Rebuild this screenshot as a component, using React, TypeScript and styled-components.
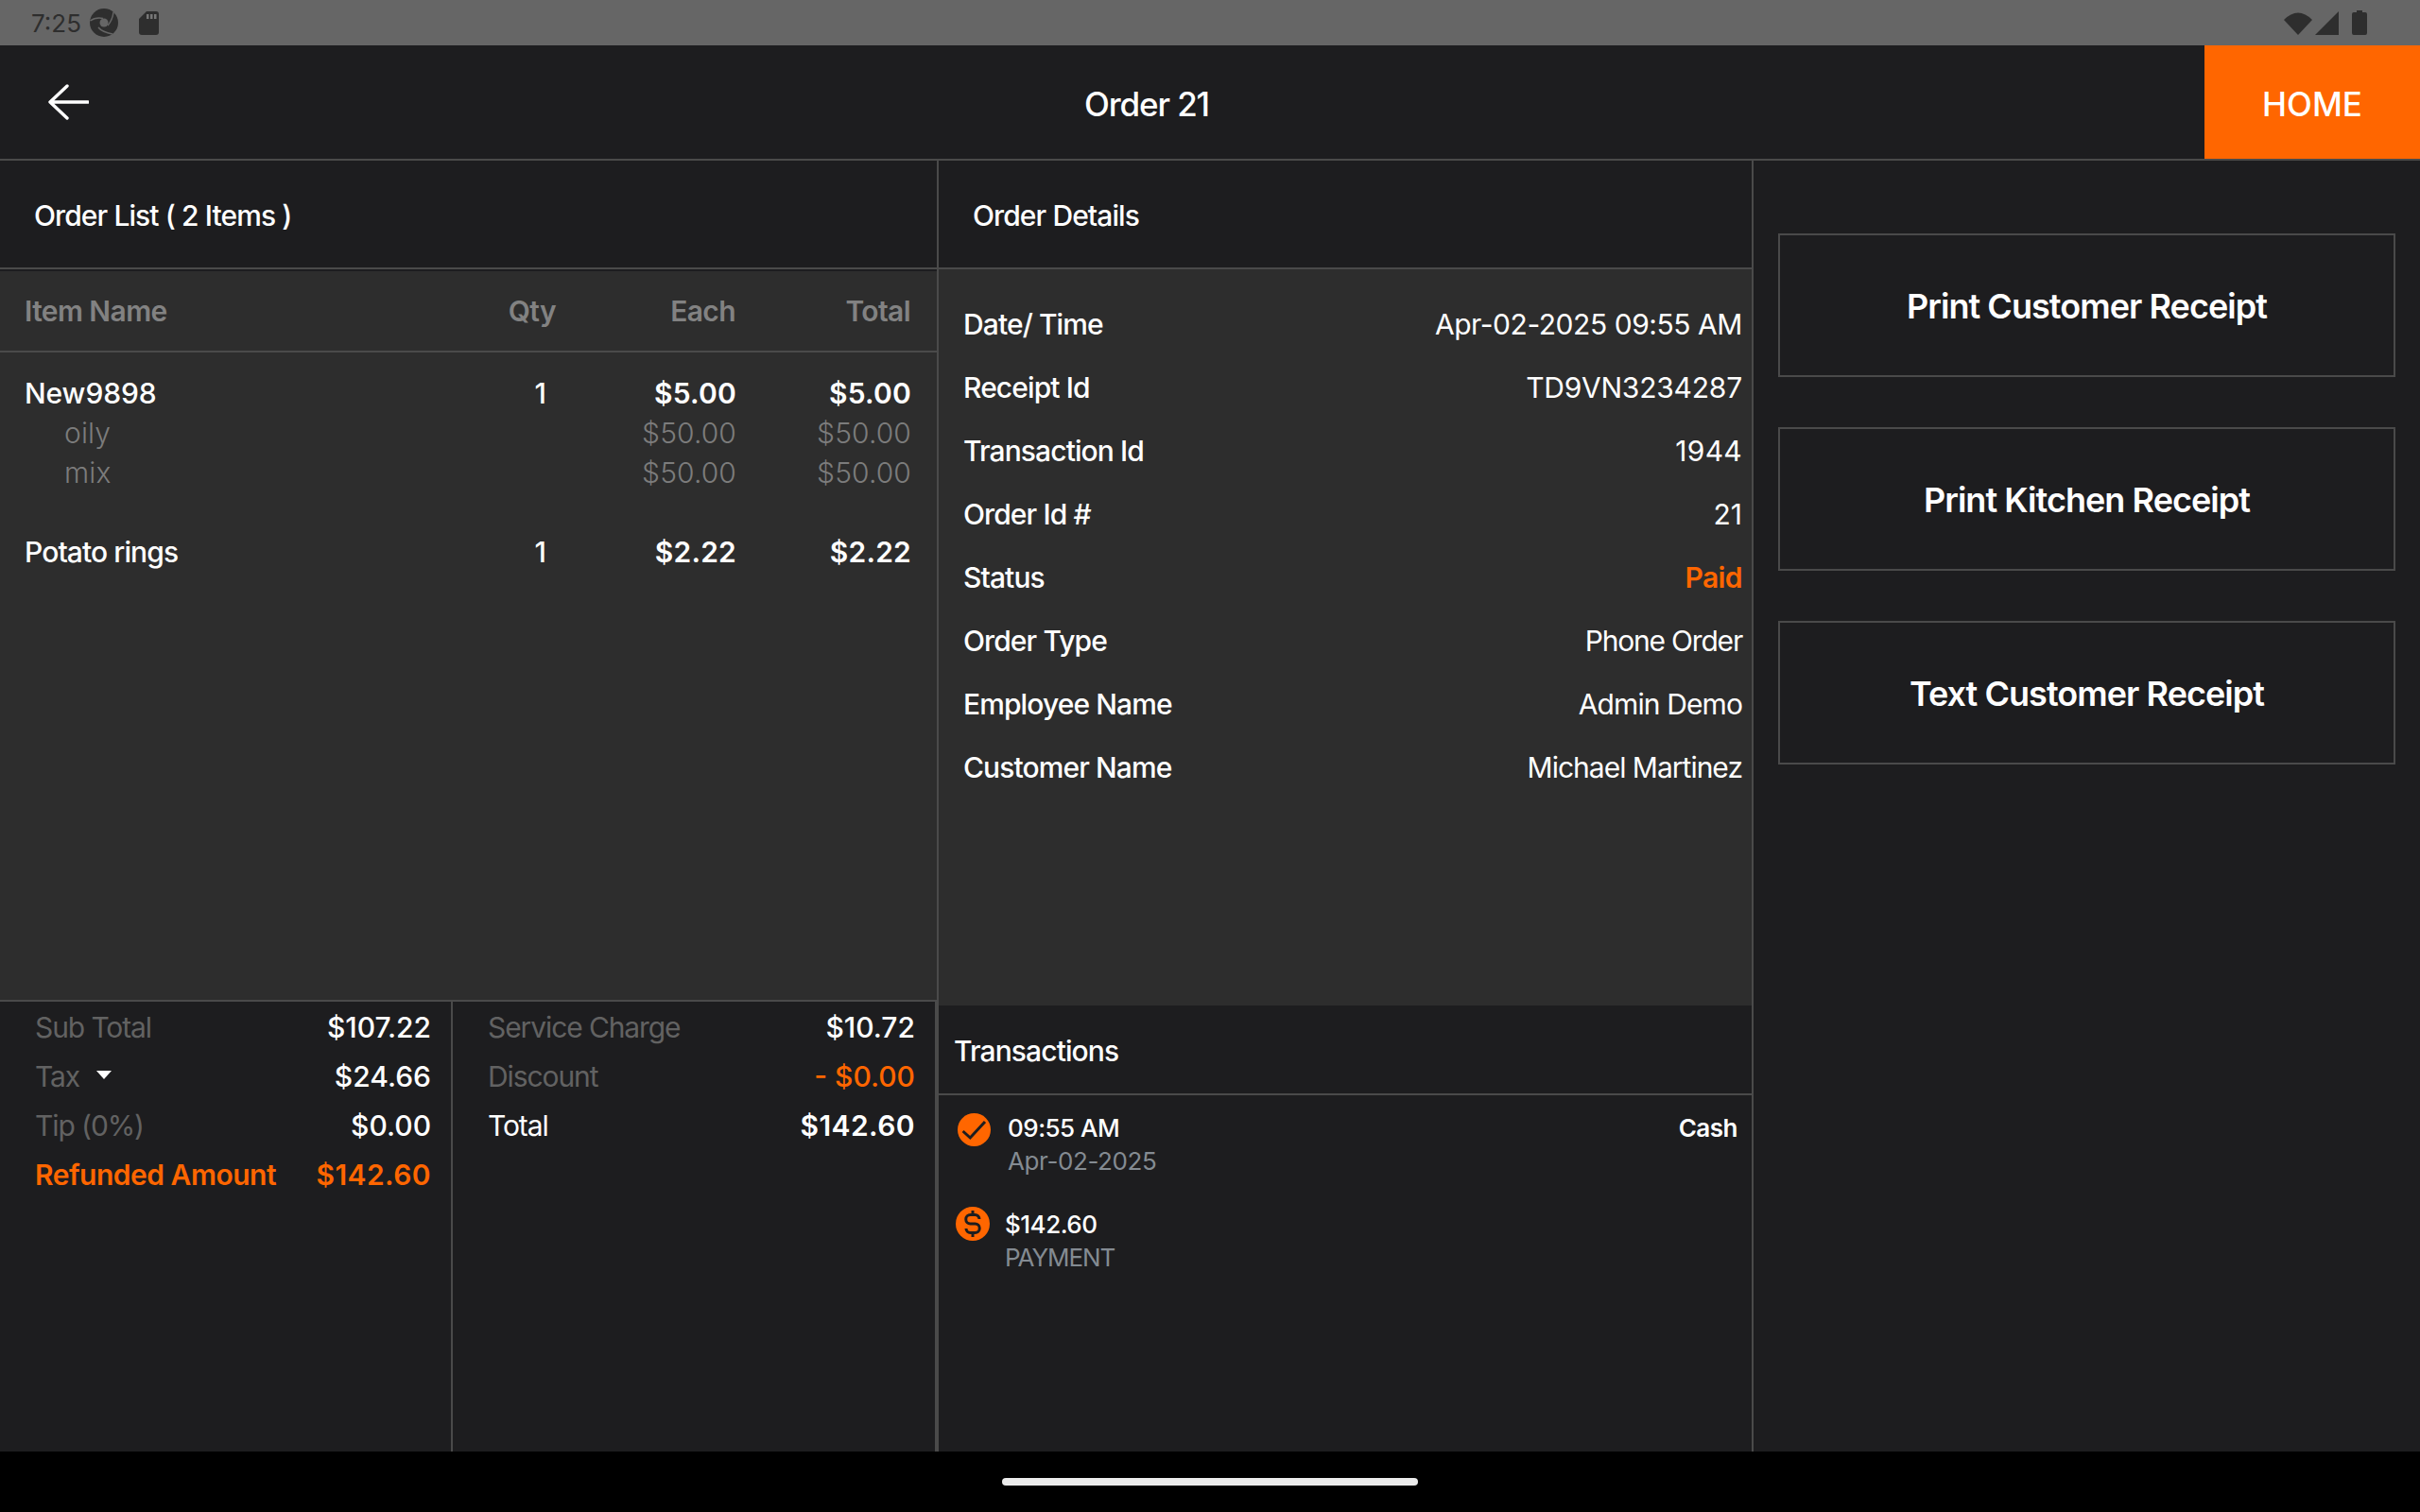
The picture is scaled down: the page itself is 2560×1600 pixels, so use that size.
import * as React from "react";
import styled, {createGlobalStyle} from "styled-components";

const orange = "#ff6600";
const line = "#4a4a4a";

const Global = createGlobalStyle`
  html, body {
    margin: 0;
    background: #000;
  }
  * {
    box-sizing: border-box;
  }
`

const Screen = styled.div`
  width: 2560px;
  height: 1600px;
  display: flex;
  flex-direction: column;
  background: #1d1d1f;
  color: #fff;
  font-family: Inter, "Liberation Sans", sans-serif;
  overflow: hidden;
`

const StatusBar = styled.div`
  height: 48px;
  flex: none;
  background: #666;
  color: #2e2e2e;
  display: flex;
  align-items: center;
  justify-content: space-between;
  padding: 0 56px 0 33px;
`

const StatusGroup = styled.div`
  display: flex;
  align-items: center;
`

const Clock = styled.span`
  font-size: 26px;
  font-weight: 400;
  margin-right: 9px;
`

const TopBar = styled.header`
  height: 122px;
  flex: none;
  display: grid;
  grid-template-columns: 228px 1fr 228px;
  align-items: stretch;
  border-bottom: 2px solid ${line};
`

const BackButton = styled.div`
  display: flex;
  align-items: center;
  padding: 0 0 0 50px;
`

const PageTitle = styled.div`
  display: flex;
  align-items: center;
  justify-content: center;
  font-size: 35px;
  font-weight: 500;
  letter-spacing: -1.1px;
  padding: 3px 134px 0 0;
`

const HomeButton = styled.div`
  background: ${orange};
  display: flex;
  align-items: center;
  justify-content: center;
  font-size: 35px;
  font-weight: 500;
  padding-top: 3px;
`

const Body = styled.main`
  flex: 1;
  min-height: 0;
  display: grid;
  grid-template-columns: 993px 862px 705px;
`

const Column = styled.section`
  display: flex;
  flex-direction: column;
  min-height: 0;
  border-right: 2px solid ${line};
`

const PanelHead = styled.div`
  height: 113px;
  flex: none;
  display: flex;
  align-items: center;
  padding: 3px 0 0 36px;
  font-size: 30px;
  font-weight: 500;
  letter-spacing: -0.9px;
`

const ListBody = styled.div`
  height: 775px;
  flex: none;
  background: #2d2d2d;
  border-top: 2px solid ${line};
  box-shadow: inset 0 2px 0 #1d1d1f;
  padding-top: 5px;
`

const TableRow = styled.div<{$indent?: boolean}>`
  display: grid;
  grid-template-columns: 1fr 100px 190px 185px;
  padding: 0 27px 0 ${p => (p.$indent ? 68 : 26)}px;
  align-items: center;
`

const HeadRow = styled(TableRow)`
  height: 83px;
  border-bottom: 2px solid ${line};
  color: #828282;
  font-size: 30px;
  font-weight: 600;
  letter-spacing: -0.6px;
  margin-bottom: 22px;
  padding: 0 28px 3px 26px;
`

const ItemRow = styled(TableRow)<{$gap?: boolean}>`
  height: 42px;
  font-size: 30px;
  font-weight: 500;
  margin-top: ${p => (p.$gap ? 42 : 0)}px;
`

const ModRow = styled(TableRow)`
  height: 42px;
  font-size: 30px;
  font-weight: 300;
  letter-spacing: 0.1px;
  color: #7c7c7c;
`

const Cell = styled.div<{$right?: boolean; $track?: number}>`
  text-align: ${p => (p.$right ? "right" : "left")};
  letter-spacing: ${p => (p.$track === undefined ? "inherit" : `${p.$track}px`)};
`

const QtyCell = styled(Cell)`
  text-align: right;
  padding-right: 11px;
`

const PriceCell = styled(Cell)`
  text-align: right;
  font-weight: 600;
  letter-spacing: 0.2px;
`

const Summary = styled.div`
  flex: 1;
  min-height: 0;
  display: grid;
  grid-template-columns: 479px 1fr;
  border-top: 2px solid ${line};
`

const SummaryCol = styled.div`
  padding: 1px 21px 0 37px;
  border-right: 2px solid ${line};
`

const SummaryRow = styled.div<{$tone?: "white" | "orange"}>`
  height: 52px;
  display: flex;
  align-items: center;
  justify-content: space-between;
  font-size: 30px;
  font-weight: ${p => (p.$tone === "orange" ? 600 : 400)};
  letter-spacing: ${p => (p.$tone === "orange" ? "-0.5px" : "-1.1px")};
  color: ${p => (p.$tone === "orange" ? orange : p.$tone === "white" ? "#fff" : "#626262")};
`

const Amount = styled.span<{$orange?: boolean; $strong?: boolean}>`
  font-weight: ${p => (p.$strong ? 600 : 500)};
  letter-spacing: ${p => (p.$strong ? "0.4px" : "0")};
  color: ${p => (p.$orange ? orange : "#fff")};
`

const Caret = styled.span`
  display: inline-block;
  width: 0;
  height: 0;
  margin: 0 0 8px 18px;
  vertical-align: middle;
  border-left: 8.5px solid transparent;
  border-right: 8.5px solid transparent;
  border-top: 9px solid #fff;
`

const DetailBody = styled.div`
  height: 781px;
  flex: none;
  background: #2d2d2d;
  border-top: 2px solid ${line};
  padding: 24px 10px 0 26px;
`

const DetailRow = styled.div`
  height: 67px;
  display: flex;
  align-items: center;
  justify-content: space-between;
  font-size: 30px;
  font-weight: 500;
  letter-spacing: -0.9px;
`

const DetailValue = styled.span<{$orange?: boolean; $track: number}>`
  font-weight: ${p => (p.$orange ? 600 : 400)};
  letter-spacing: ${p => p.$track}px;
  color: ${p => (p.$orange ? orange : "#fff")};
`

const TxHead = styled.div`
  height: 95px;
  flex: none;
  display: flex;
  align-items: center;
  padding: 3px 0 0 16px;
  font-size: 30px;
  font-weight: 500;
  letter-spacing: -0.9px;
  border-bottom: 2px solid ${line};
`

const TxRow = styled.div<{$top: number; $left: number}>`
  display: grid;
  grid-template-columns: auto 1fr auto;
  padding: ${p => p.$top}px 15px 0 ${p => p.$left}px;
`

const TxBadge = styled.div<{$size: number; $top: number}>`
  width: ${p => p.$size}px;
  height: ${p => p.$size}px;
  margin-top: ${p => p.$top}px;
  border-radius: 50%;
  background: ${orange};
`

const TxText = styled.div<{$left: number}>`
  padding-left: ${p => p.$left}px;
`

const TxLine = styled.div`
  height: 35px;
  display: flex;
  align-items: center;
  font-size: 26px;
  font-weight: 500;
  letter-spacing: -0.5px;
`

const TxSub = styled(TxLine)<{$track?: number}>`
  font-weight: 400;
  letter-spacing: ${p => p.$track ?? -0.4}px;
  color: #848b92;
`

const TxType = styled(TxLine)`
  font-weight: 600;
`

const Actions = styled.aside`
  display: flex;
  flex-direction: column;
  gap: 53px;
  padding: 77px 26px 0 26px;
`

const ActionButton = styled.div`
  height: 152px;
  border: 2px solid ${line};
  display: flex;
  align-items: center;
  justify-content: center;
  padding-top: 2px;
  font-size: 36px;
  font-weight: 600;
  letter-spacing: -0.95px;
`

const NavBar = styled.div`
  height: 64px;
  flex: none;
  background: #000;
  display: flex;
  justify-content: center;
  padding-top: 28px;
`

const HomePill = styled.div`
  width: 440px;
  height: 8px;
  border-radius: 4px;
  background: #ebebeb;
`

const BackArrow = () => (
  <svg width="44" height="38" viewBox="0 0 44 38">
    <path d="M43 19H3M21 2L3 19l18 17" fill="none" stroke="#fff" strokeWidth="3.4" strokeLinecap="round" strokeLinejoin="round"/>
  </svg>
)

const ShutterIcon = () => (
  <svg width="30" height="30" viewBox="0 0 30 30">
    <circle cx="15" cy="15" r="15" fill="#2e2e2e"/>
    <circle cx="15" cy="15" r="4.5" fill="#666"/>
    <path d="M0.5 13Q6 9 14 10.5M25 4Q24 12 19 18M9 20Q13 25 24 27" fill="none" stroke="#666" strokeWidth="1.5"/>
  </svg>
)

const SdIcon = () => (
  <svg width="21" height="25" viewBox="0 0 21 25" style={{marginLeft: 22}}>
    <path fill="#2e2e2e" d="M8 0H18a3 3 0 0 1 3 3V22a3 3 0 0 1-3 3H3a3 3 0 0 1-3-3V8Z"/>
    <path fill="#777" d="M8 3h2.500v5H8zM12 3h2.500v5H12zM16 3h2.500v5H16z"/>
  </svg>
)

const WifiIcon = () => (
  <svg width="30" height="25" viewBox="0 0 30 25">
    <path fill="#2e2e2e" d="M0 9 Q15 -6 30 9 L15 25Z"/>
  </svg>
)

const SignalIcon = () => (
  <svg width="25" height="25" viewBox="0 0 25 25" style={{marginLeft: 3}}>
    <path fill="#2e2e2e" d="M25 0V25H0Z"/>
  </svg>
)

const BatteryIcon = () => (
  <svg width="16" height="26" viewBox="0 0 16 26" style={{marginLeft: 14}}>
    <path fill="#2e2e2e" d="M5 0h6v2h3a2 2 0 0 1 2 2V24a2 2 0 0 1-2 2H2a2 2 0 0 1-2-2V4a2 2 0 0 1 2-2h3Z"/>
  </svg>
)

const CheckGlyph = () => (
  <svg width="35" height="35" viewBox="0 0 35 35" style={{display: "block"}}>
    <path d="M5.600 19L13.300 26L29 9" fill="none" stroke="#1d1d1f" strokeWidth="3"/>
  </svg>
)

const DollarGlyph = () => (
  <svg width="36" height="36" viewBox="0 0 36 36" style={{display: "block"}}>
    <path d="M25 13a4.500 4.500 0 0 0-4.500-4.500h-5a4.750 4.750 0 0 0 0 9.500h5a4.750 4.750 0 0 1 0 9.500h-5A4.500 4.500 0 0 1 11 23M18 4v4.500M18 27.500V32" fill="none" stroke="#1d1d1f" strokeWidth="3"/>
  </svg>
)

const details: [string, string, number, boolean?][] = [
  ["Date/ Time", "Apr-02-2025 09:55 AM", -0.45],
  ["Receipt Id", "TD9VN3234287", -0.2],
  ["Transaction Id", "1944", 0.3],
  ["Order Id #", "21", 0],
  ["Status", "Paid", -0.6, true],
  ["Order Type", "Phone Order", -1.2],
  ["Employee Name", "Admin Demo", -0.9],
  ["Customer Name", "Michael Martinez", -1],
]

const App: React.FunctionComponent = () => {
  return (
    <Screen>
      <Global/>
      <StatusBar>
        <StatusGroup>
          <Clock>7:25</Clock>
          <ShutterIcon/>
          <SdIcon/>
        </StatusGroup>
        <StatusGroup>
          <WifiIcon/>
          <SignalIcon/>
          <BatteryIcon/>
        </StatusGroup>
      </StatusBar>
      <TopBar>
        <BackButton><BackArrow/></BackButton>
        <PageTitle>Order 21</PageTitle>
        <HomeButton>HOME</HomeButton>
      </TopBar>
      <Body>
        <Column>
          <PanelHead>Order List ( 2 Items )</PanelHead>
          <ListBody>
            <HeadRow>
              <Cell>Item Name</Cell>
              <Cell $right>Qty</Cell>
              <Cell $right>Each</Cell>
              <Cell $right>Total</Cell>
            </HeadRow>
            <ItemRow>
              <Cell $track={-0.1}>New9898</Cell>
              <QtyCell>1</QtyCell>
              <PriceCell>$5.00</PriceCell>
              <PriceCell>$5.00</PriceCell>
            </ItemRow>
            <ModRow $indent>
              <Cell>oily</Cell>
              <Cell/>
              <Cell $right>$50.00</Cell>
              <Cell $right>$50.00</Cell>
            </ModRow>
            <ModRow $indent>
              <Cell>mix</Cell>
              <Cell/>
              <Cell $right>$50.00</Cell>
              <Cell $right>$50.00</Cell>
            </ModRow>
            <ItemRow $gap>
              <Cell $track={-0.9}>Potato rings</Cell>
              <QtyCell>1</QtyCell>
              <PriceCell>$2.22</PriceCell>
              <PriceCell>$2.22</PriceCell>
            </ItemRow>
          </ListBody>
          <Summary>
            <SummaryCol>
              <SummaryRow>Sub Total<Amount>$107.22</Amount></SummaryRow>
              <SummaryRow><span>Tax<Caret/></span><Amount>$24.66</Amount></SummaryRow>
              <SummaryRow>Tip (0%)<Amount>$0.00</Amount></SummaryRow>
              <SummaryRow $tone="orange">Refunded Amount<Amount $orange $strong>$142.60</Amount></SummaryRow>
            </SummaryCol>
            <SummaryCol>
              <SummaryRow>Service Charge<Amount>$10.72</Amount></SummaryRow>
              <SummaryRow>Discount<Amount $orange>- $0.00</Amount></SummaryRow>
              <SummaryRow $tone="white">Total<Amount $strong>$142.60</Amount></SummaryRow>
            </SummaryCol>
          </Summary>
        </Column>
        <Column>
          <PanelHead>Order Details</PanelHead>
          <DetailBody>
            {details.map(([label, value, track, hot]) => (
              <DetailRow key={label}>
                {label}
                <DetailValue $orange={hot} $track={track}>{value}</DetailValue>
              </DetailRow>
            ))}
          </DetailBody>
          <TxHead>Transactions</TxHead>
          <TxRow $top={17} $left={20}>
            <TxBadge $size={35} $top={2}><CheckGlyph/></TxBadge>
            <TxText $left={18}>
              <TxLine>09:55 AM</TxLine>
              <TxSub>Apr-02-2025</TxSub>
            </TxText>
            <TxType>Cash</TxType>
          </TxRow>
          <TxRow $top={32} $left={18}>
            <TxBadge $size={36} $top={-1}><DollarGlyph/></TxBadge>
            <TxText $left={16}>
              <TxLine>$142.60</TxLine>
              <TxSub $track={-1.1}>PAYMENT</TxSub>
            </TxText>
            <div/>
          </TxRow>
        </Column>
        <Actions>
          <ActionButton>Print Customer Receipt</ActionButton>
          <ActionButton>Print Kitchen Receipt</ActionButton>
          <ActionButton>Text Customer Receipt</ActionButton>
        </Actions>
      </Body>
      <NavBar><HomePill/></NavBar>
    </Screen>
  )
}

export default App
